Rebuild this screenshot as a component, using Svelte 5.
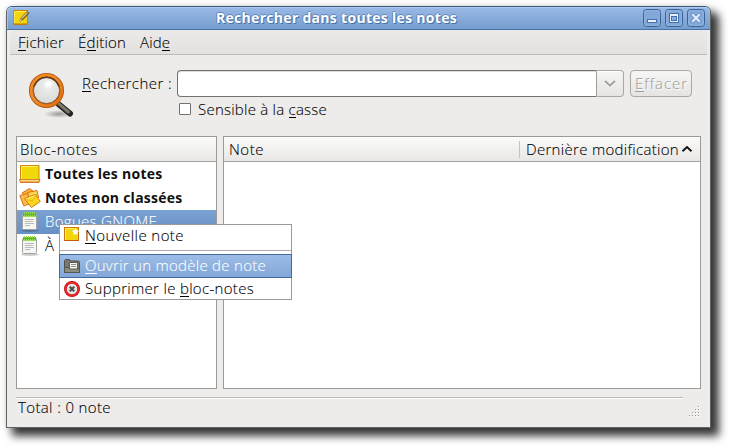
<script>
  const menus = [
    { pre: '', key: 'F', post: 'ichier', width: 46 },
    { pre: 'É', key: 'd', post: 'ition', width: 48 },
    { pre: 'Aid', key: 'e', post: '', width: 30 }
  ];

  // Spreads the letters of a label so that it takes up the given width.
  function fit(node, width) {
    const natural = node.getBoundingClientRect().width;
    const count = node.textContent.length;
    node.style.letterSpacing = `${(width - natural) / count}px`;
  }
</script>

{#snippet label(pre, key, post, width)}
  <span class="label" use:fit={width}>{pre}{#if key}<span class="key">{key}</span>{/if}{post}</span>
{/snippet}

{#snippet notebook()}
  <svg width="20" height="22" viewBox="0 0 20 22">
    <ellipse cx="10" cy="19.500" rx="9" ry="1.500" fill="#000" opacity=".2" />
    <rect x="2.500" y="3.500" width="14" height="15" rx="1" fill="#f6f6f4" stroke="#a3a4a1" />
    <path d="M5 8.500h9M5 10.500h8M5 12.500h9M5 14.500h5" stroke="#b9bbb7" />
    <path d="M3 2h13v3.500H3z" fill="#64b52c" />
    <path d="M4.500 1v5M6.500 1v5M8.500 1v5M10.500 1v5M12.500 1v5M14.500 1v5" stroke="#92dc4e" stroke-dasharray="2 1" />
  </svg>
{/snippet}

<div class="page">
  <div class="window">
    <header class="titlebar">
      <svg class="app" width="18" height="18" viewBox="0 0 18 18">
        <rect x=".5" y="1.500" width="14" height="14" rx=".5" fill="#f0d60b" stroke="#c98a06" />
        <path d="M.5 15h14" stroke="#b57408" />
        <path d="M2 2.500h11.500M1.500 3v11" stroke="#fff36b" stroke-width=".8" />
        <path d="M7 12l1-3 6-6.500 2 1.800-6.200 6.500z" fill="#9b6b28" stroke="#5a411b" stroke-width=".8" />
        <path d="M8.500 9.500l5.800-6" stroke="#e5c68c" stroke-width="1.100" />
        <path d="M7 12l.7-2.200 1.500 1.400z" fill="#f7e5bd" />
      </svg>
      <h1>{@render label('Rechercher dans toutes les notes', '', '', 241)}</h1>
      <div class="controls">
        <svg viewBox="0 0 18 18"><rect class="wb" x=".5" y=".5" width="17" height="17" rx="3" /><rect class="wi" x="1.500" y="1.500" width="15" height="15" rx="2" /><rect x="4.500" y="10.500" width="9" height="3" fill="#eaf1fb" stroke="#4470aa" /></svg>
        <svg viewBox="0 0 18 18"><rect class="wb" x=".5" y=".5" width="17" height="17" rx="3" /><rect class="wi" x="1.500" y="1.500" width="15" height="15" rx="2" /><rect x="4.500" y="4.500" width="9" height="9" fill="#e4edf9" stroke="#4470aa" /><rect x="6.500" y="7.500" width="5" height="4" fill="#8aaede" stroke="#4470aa" /></svg>
        <svg viewBox="0 0 18 18"><rect class="wb" x=".5" y=".5" width="17" height="17" rx="3" /><rect class="wi" x="1.500" y="1.500" width="15" height="15" rx="2" /><path d="M6 6l6 6M12 6l-6 6" stroke="#6c96cd" stroke-width="4" stroke-linecap="square" /><path d="M6 6l6 6M12 6l-6 6" stroke="#e4edf9" stroke-width="2" stroke-linecap="square" /></svg>
      </div>
    </header>

    <nav class="menubar">
      {#each menus as m}
        {@render label(m.pre, m.key, m.post, m.width)}
      {/each}
    </nav>

    <section class="search">
      <svg class="magnifier" width="48" height="48" viewBox="0 0 48 48">
        <defs>
          <radialGradient id="lens" cx=".55" cy=".3" r=".75">
            <stop offset="0" stop-color="#fff" /><stop offset=".25" stop-color="#e9e9e8" /><stop offset="1" stop-color="#d8d8d7" />
          </radialGradient>
          <linearGradient id="ring" x1="0" y1="0" x2="1" y2="1">
            <stop offset="0" stop-color="#f58a1d" /><stop offset=".5" stop-color="#e98a2b" /><stop offset="1" stop-color="#e06b08" />
          </linearGradient>
          <radialGradient id="shade"><stop offset="0" stop-color="#000" stop-opacity=".35" /><stop offset="1" stop-color="#000" stop-opacity="0" /></radialGradient>
        </defs>
        <ellipse cx="32" cy="42" rx="15" ry="4" fill="url(#shade)" />
        <path d="M32 32.500L43 41.500" stroke="#25231f" stroke-width="6" stroke-linecap="round" />
        <path d="M31.500 31.500L41.500 40" stroke="#7c776a" stroke-width="3" stroke-linecap="round" />
        <circle cx="19.500" cy="18.500" r="14" fill="url(#lens)" />
        <circle cx="19.500" cy="18.500" r="15.300" fill="none" stroke="#b9500a" stroke-width="4.500" />
        <circle cx="19.500" cy="18.500" r="15.300" fill="none" stroke="url(#ring)" stroke-width="2.800" />
        <circle cx="19.500" cy="18.500" r="13.100" fill="none" stroke="#8a5a2b" stroke-width="1" />
        <path d="M7 14.500a13.100 13.100 0 0 1 25 0" fill="none" stroke="#5d3b1b" stroke-width="1.500" />
        <ellipse cx="22" cy="11.500" rx="3.500" ry="2.500" fill="#fff" opacity=".8" />
      </svg>
      <div class="fields">
        <div class="line">
          <div class="prompt">{@render label('', 'R', 'echercher :', 90)}</div>
          <div class="combo">
            <div class="entry"></div>
            <div class="drop"><svg width="14" height="10" viewBox="0 0 14 10"><path d="M2 3l5 4.500L12 3" fill="none" stroke="#fff" stroke-width="2" /><path d="M2 2l5 4.700L12 2" fill="none" stroke="#a4a19d" stroke-width="2" /></svg></div>
          </div>
          <div class="clear">{@render label('', 'E', 'ffacer', 53)}</div>
        </div>
        <div class="case"><i class="box"></i>{@render label('Sensible à la ', 'c', 'asse', 129)}</div>
      </div>
    </section>

    <main class="panes">
      <div class="pane left">
        <div class="head"><div class="hl">{@render label('Bloc-notes', '', '', 78)}</div></div>
        <div class="row bold">
          <svg width="22" height="22" viewBox="0 0 22 22">
            <path d="M1.500 2.500h18.500v14h-18.500z" fill="#efd909" stroke="#d5830c" />
            <path d="M2.500 4v12M2.500 3.500h16.500" stroke="#fff36a" stroke-width="1" />
            <path d="M.5 16.500h20.500l-1 3H1.500z" fill="#f3ac4e" stroke="#c7650c" stroke-width=".8" />
            <path d="M1.500 17.300h18.500" stroke="#fae19a" />
          </svg>
          {@render label('Toutes les notes', '', '', 117.500)}
        </div>
        <div class="row bold">
          <svg width="22" height="22" viewBox="0 0 22 22">
            <path d="M3 6L10.500 1.500l6 4.500-7 6z" fill="#fbb040" stroke="#dd700b" />
            <path d="M8.500 5.500l9.500-2 1.500 7-10 2z" fill="#fcd54e" stroke="#dd700b" />
            <path d="M.8 8.500l8-2 2 10-6 2.500z" fill="#f9bb4e" stroke="#dd700b" />
            <path d="M5.500 11.500L16.500 7.500l4.800 7-9 6z" fill="#fbd820" stroke="#dd7a0b" />
            <path d="M7 12l9-3.300" stroke="#fff27c" />
            <path d="M6.500 12.500l7 1.500 3-5" fill="none" stroke="#f0a012" stroke-width=".8" />
          </svg>
          {@render label('Notes non classées', '', '', 137.500)}
        </div>
        <div class="row selected">{@render notebook()}{@render label('Bogues GNOME', '', '', 112)}</div>
        <div class="row">{@render notebook()}{@render label('À', '', '', 10)}</div>
      </div>
      <div class="pane right">
        <div class="head">
          <div class="hl first">{@render label('Note', '', '', 35)}</div>
          <div class="hl last">{@render label('Dernière modification', '', '', 153)}<svg width="12" height="8" viewBox="0 0 12 8"><path d="M1.500 6.200L6 2l4.500 4.200" fill="none" stroke="#111" stroke-width="1.900" /></svg></div>
        </div>
      </div>
    </main>

    <footer>
      <div class="status">{@render label('Total : 0 note', '', '', 93)}</div>
      <svg class="grip" width="12" height="12" viewBox="0 0 12 12">
        {#each [[9, 0], [6, 3], [9, 3], [3, 6], [6, 6], [9, 6], [0, 9], [3, 9], [6, 9], [9, 9]] as [x, y]}
          <rect x={x + 1} y={y + 1} width="1" height="1" fill="#fff" /><rect {x} {y} width="1" height="1" fill="#9a9895" />
        {/each}
      </svg>
    </footer>
  </div>

  <div class="popup">
    <div class="item">
      <svg class="new" width="16" height="16" viewBox="0 0 16 16"><rect x=".5" y="1.500" width="14" height="13" fill="#f3d50c" stroke="#c97810" /><path d="M0 14.500h15" stroke="#c65b0a" /><path d="M1.500 13.500v-11H10" fill="none" stroke="#fff26b" /><path d="M11.500 2l1.100 2.300 2.600.4-1.900 1.800.4 2.600-2.200-1.200-2.300 1.200.4-2.600-1.800-1.800 2.600-.4z" fill="#fff" /></svg>
      {@render label('', 'N', 'ouvelle note', 99)}
    </div>
    <div class="sep"></div>
    <div class="item active">
      <svg width="16" height="16" viewBox="0 0 16 16"><path d="M.5 14.500v-12l1-1h4l1 1.500h8l1 1v10.500z" fill="#77776b" stroke="#50514a" /><path d="M5.500 4.500h8v7h-8z" fill="#f6f6f2" stroke="#5b5c54" /><path d="M7 6.500h5M7 8.500h5" stroke="#8b8b84" /><path d="M.5 14.500v-5h4l1 1.500h10v3.500z" fill="#8e8e80" stroke="#55564e" /></svg>
      {@render label('', 'O', 'uvrir un modèle de note', 181)}
    </div>
    <div class="item">
      <svg width="16" height="16" viewBox="0 0 16 16"><circle cx="8" cy="8" r="6.700" fill="#e6e6e4" stroke="#b90f14" stroke-width="2.600" /><circle cx="8" cy="8" r="6.500" fill="none" stroke="#e92a2d" stroke-width="1.900" /><path d="M5.800 5.800l4.400 4.400M10.200 5.800l-4.400 4.400" stroke="#4b4e4c" stroke-width="2.100" /></svg>
      {@render label('Supprimer le ', 'b', 'loc-notes', 169)}
    </div>
  </div>
</div>

<style>
  :global(body) { margin: 0; background: #fff; overflow: hidden; }
  .page { position: relative; box-sizing: border-box; width: 731px; height: 448px; padding: 6px 20px 20px 6px; background: #fff; font: 300 15px/20px "Open Sans", "Noto Sans", sans-serif; color: #000; overflow: hidden; -webkit-text-stroke: .1px currentColor; }
  .window { box-sizing: border-box; width: 705px; height: 422px; display: flex; flex-direction: column; border: 1px solid #62625f; border-top-color: #36597f; border-radius: 6px 6px 0 0; background: #edeceb; box-shadow: 7px 7px 9px 1px rgba(0, 0, 0, .78), 0 0 8px rgba(0, 0, 0, .12); }
  .label { display: inline-block; white-space: pre; flex: none; }
  .key { border-bottom: 1px solid currentColor; display: inline-block; line-height: 15px; }
  svg { display: block; flex: none; }

  .titlebar { height: 22px; flex: none; display: flex; align-items: center; border-bottom: 1px solid #4574ab; border-radius: 5px 5px 0 0; background: linear-gradient(#9abae6, #769dcf); box-shadow: inset 0 1px #b1cbed, inset 1px 0 #a5c2e9; }
  .app { margin: 0 0 0 6px; }
  h1 { flex: 1; margin: 0 0 0 185px; font-size: 14px; line-height: 20px; font-weight: 700; color: #fff; -webkit-text-stroke: 0; text-shadow: 1px 1px #4672a9, -1px 0 #5d87bd, 0 -1px #5d87bd; }
  .controls { display: flex; gap: 4px; padding-right: 5px; }
  .controls svg { width: 18px; height: 18px; }
  .wb { fill: #82a8da; stroke: #3b6292; }
  .wi { fill: none; stroke: #8db0df; }

  .menubar { height: 24px; flex: none; display: flex; align-items: center; gap: 14px; margin: 0 3px; padding-left: 8px; border-bottom: 1px solid #bdbbb9; background: linear-gradient(#ebeae8, #e2e1df); }

  .search { display: flex; height: 81px; flex: none; }
  .magnifier { margin: 17px 0 0 20px; }
  .fields { padding: 15px 0 0 7px; }
  .line { display: flex; height: 27px; align-items: stretch; }
  .prompt { width: 95px; padding-top: 3px; }
  .combo { display: flex; width: 447px; }
  .entry { flex: 1; border: 1px solid #757270; border-right: 0; border-radius: 4px 0 0 4px; background: #fff; box-shadow: inset 0 1px #dedcda; }
  .drop { width: 26px; border: 1px solid #aaa7a4; border-left-color: #a09d9a; border-radius: 0 4px 4px 0; background: linear-gradient(#f6f6f5, #e5e4e2); display: flex; align-items: center; justify-content: center; box-shadow: inset 0 1px #fff; }
  .clear { box-sizing: border-box; width: 62px; margin-left: 6px; padding: 2px 0 0 4px; border: 1px solid #aaa7a4; border-radius: 4px; background: linear-gradient(#f6f6f5, #e5e4e2); color: #a29f9c; text-shadow: 1px 1px #fff; }
  .case { display: flex; align-items: center; height: 23px; padding-left: 97px; }
  .box { box-sizing: border-box; width: 12px; height: 12px; margin: 1px 7px 0 0; border: 1px solid #73706d; border-radius: 1px; background: #fff; }

  .panes { display: flex; gap: 6px; height: 253px; flex: none; padding-left: 9px; }
  .pane { box-sizing: border-box; border: 1px solid #9c9997; background: #fff; }
  .left { width: 201px; }
  .right { width: 478px; }
  .head { display: flex; height: 24px; border-bottom: 1px solid #a4a19e; background: linear-gradient(#fbfbfa, #e8e7e5); }
  .hl { padding: 2px 0 0 3px; }
  .hl.first { flex: 1; padding-left: 5px; }
  .hl.last { box-sizing: border-box; width: 181px; display: flex; padding-left: 7px; position: relative; }
  .hl.last::before { content: ""; position: absolute; left: 0; top: 4px; width: 1px; height: 17px; background: #c5c3c1; }
  .hl.last svg { margin: 6px 0 0 2px; }
  .row { display: flex; align-items: center; height: 24px; padding-left: 2px; gap: 4px; }
  .row:not(.bold) { padding-left: 3px; gap: 5px; }
  .row:not(.bold) .label { padding-bottom: 2px; }
  .bold { font-weight: 700; font-size: 14px; color: #111; -webkit-text-stroke: 0; }
  .row.selected { background: linear-gradient(#7ba1d2, #6790c6); color: #fff; }

  footer { position: relative; flex: 1; display: flex; justify-content: space-between; padding: 8px 10px 0 9px; }
  .status { box-sizing: border-box; width: 667px; height: 30px; padding: 0 0 0 2px; border-top: 1px solid #bdbbb8; box-shadow: inset 0 1px #fff; line-height: 19px; }
  .grip { position: absolute; right: 9px; bottom: 9px; }

  .popup { box-sizing: border-box; position: absolute; left: 59px; top: 224px; width: 233px; height: 76px; border: 1px solid #9c9997; background: #fff; }
  .item { box-sizing: border-box; display: flex; align-items: center; gap: 5px; height: 22px; padding-left: 4px; }
  .item .label { padding-bottom: 2px; }
  .new { margin-bottom: 4px; }
  .sep { height: 1px; margin: 3px 0; background: #aaa7a5; }
  .active { height: 24px; margin: 0 -1px; padding-left: 4px; border: 1px solid #426a9c; background: linear-gradient(#9cbce6, #82a7d9); color: #fff; }
</style>
